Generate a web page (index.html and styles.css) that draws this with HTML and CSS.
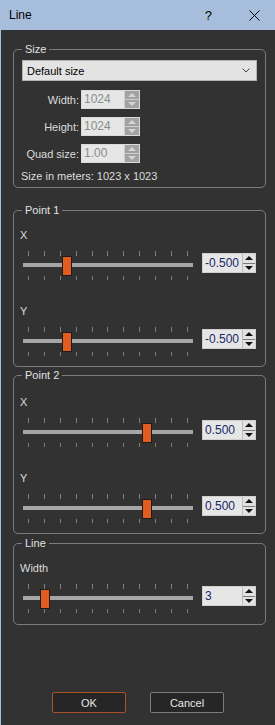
FILE: index.html
```html
<!DOCTYPE html>
<html lang="en">
<head>
    <meta charset="UTF-8">
    <meta name="viewport" content="width=device-width, initial-scale=1.0">
    <title>Line</title>
    <link rel="stylesheet" href="styles.css">
</head>
<body>
    <div class="window">
        <div class="titlebar">
            <span class="title">Line</span>
            <span class="help">?</span>
            <svg class="close" width="11" height="11" viewBox="0 0 11 11">
                <path d="M0.5 0.5 L10.5 10.5 M10.5 0.5 L0.5 10.5" stroke="#000" stroke-width="1" fill="none"/>
            </svg>
        </div>

        <div class="content">
            <fieldset class="group group-size">
                <legend>Size</legend>
                <div class="select">
                    <span>Default size</span>
                    <svg class="chevron" width="8" height="5" viewBox="0 0 8 5">
                        <path d="M0.5 0.5 L4 4 L7.5 0.5" stroke="#444" fill="none"/>
                    </svg>
                </div>
                <div class="field first">
                    <label>Width:</label>
                    <div class="spin disabled">
                        <span class="spin-text">1024</span>
                        <span class="spin-btns"><i class="up"></i><i class="down"></i></span>
                    </div>
                </div>
                <div class="field">
                    <label>Height:</label>
                    <div class="spin disabled">
                        <span class="spin-text">1024</span>
                        <span class="spin-btns"><i class="up"></i><i class="down"></i></span>
                    </div>
                </div>
                <div class="field">
                    <label>Quad size:</label>
                    <div class="spin disabled">
                        <span class="spin-text">1.00</span>
                        <span class="spin-btns"><i class="up"></i><i class="down"></i></span>
                    </div>
                </div>
                <p class="meters">Size in meters: 1023 x 1023</p>
            </fieldset>

            <fieldset class="group group-p1">
                <legend>Point 1</legend>
                <div class="axis">X</div>
                <div class="slider-row">
                    <div class="slider">
                        <div class="ticks top"><i></i><i></i><i></i><i></i><i></i><i></i><i></i><i></i><i></i><i></i><i></i></div>
                        <div class="groove"></div>
                        <div class="ticks bottom"><i></i><i></i><i></i><i></i><i></i><i></i><i></i><i></i><i></i><i></i><i></i></div>
                        <div class="handle" style="left: 40px"></div>
                    </div>
                    <div class="spin">
                        <span class="spin-text">-0.500</span>
                        <span class="spin-btns"><i class="up"></i><i class="down"></i></span>
                    </div>
                </div>
                <div class="axis next">Y</div>
                <div class="slider-row">
                    <div class="slider">
                        <div class="ticks top"><i></i><i></i><i></i><i></i><i></i><i></i><i></i><i></i><i></i><i></i><i></i></div>
                        <div class="groove"></div>
                        <div class="ticks bottom"><i></i><i></i><i></i><i></i><i></i><i></i><i></i><i></i><i></i><i></i><i></i></div>
                        <div class="handle" style="left: 40px"></div>
                    </div>
                    <div class="spin">
                        <span class="spin-text">-0.500</span>
                        <span class="spin-btns"><i class="up"></i><i class="down"></i></span>
                    </div>
                </div>
            </fieldset>

            <fieldset class="group group-p2">
                <legend>Point 2</legend>
                <div class="axis">X</div>
                <div class="slider-row">
                    <div class="slider">
                        <div class="ticks top"><i></i><i></i><i></i><i></i><i></i><i></i><i></i><i></i><i></i><i></i><i></i></div>
                        <div class="groove"></div>
                        <div class="ticks bottom"><i></i><i></i><i></i><i></i><i></i><i></i><i></i><i></i><i></i><i></i><i></i></div>
                        <div class="handle" style="left: 120px"></div>
                    </div>
                    <div class="spin">
                        <span class="spin-text">0.500</span>
                        <span class="spin-btns"><i class="up"></i><i class="down"></i></span>
                    </div>
                </div>
                <div class="axis next">Y</div>
                <div class="slider-row">
                    <div class="slider">
                        <div class="ticks top"><i></i><i></i><i></i><i></i><i></i><i></i><i></i><i></i><i></i><i></i><i></i></div>
                        <div class="groove"></div>
                        <div class="ticks bottom"><i></i><i></i><i></i><i></i><i></i><i></i><i></i><i></i><i></i><i></i><i></i></div>
                        <div class="handle" style="left: 120px"></div>
                    </div>
                    <div class="spin">
                        <span class="spin-text">0.500</span>
                        <span class="spin-btns"><i class="up"></i><i class="down"></i></span>
                    </div>
                </div>
            </fieldset>

            <fieldset class="group group-line">
                <legend>Line</legend>
                <div class="axis">Width</div>
                <div class="slider-row">
                    <div class="slider">
                        <div class="ticks top"><i></i><i></i><i></i><i></i><i></i><i></i><i></i><i></i><i></i><i></i><i></i></div>
                        <div class="groove"></div>
                        <div class="ticks bottom"><i></i><i></i><i></i><i></i><i></i><i></i><i></i><i></i><i></i><i></i><i></i></div>
                        <div class="handle" style="left: 18px"></div>
                    </div>
                    <div class="spin">
                        <span class="spin-text">3</span>
                        <span class="spin-btns"><i class="up"></i><i class="down"></i></span>
                    </div>
                </div>
            </fieldset>
        </div>

        <div class="buttons">
            <button class="btn btn-ok">OK</button>
            <button class="btn">Cancel</button>
        </div>
    </div>
</body>
</html>
```

FILE: styles.css
```css
body{
    margin: 0;
    padding: 0;
    background-color: #323232;
    font-family: "Liberation Sans", Arial, sans-serif;
    font-size: 11px;
    color: #dcdcdc;
}

.window{
    width: 275px;
    height: 725px;
    box-sizing: border-box;
    border-left: 1px solid #a6bddb;
    display: flex;
    flex-direction: column;
}

.titlebar{
    height: 30px;
    flex: none;
    background-color: #a6bddb;
    color: #000;
    font-size: 12px;
    display: flex;
    align-items: center;
    padding-left: 8px;
}
.titlebar .title{
    flex: 1;
}
.titlebar .help{
    font-size: 13px;
    margin-right: 37px;
}
.titlebar .close{
    margin-right: 15px;
}

.content{
    padding: 12px 9px 0 12px;
}

.group{
    margin: 0;
    border: 1px solid #7b7b7b;
    border-radius: 5px;
    padding: 4px 8px 4px 8px;
    min-width: 0;
}
.group legend{
    padding: 0 3px;
    line-height: 14px;
    color: #e2e2e2;
}
.group-p1{
    margin-top: 15px;
    padding-top: 11px;
    padding-bottom: 10px;
}
.group-p2{
    margin-top: 1px;
    padding-top: 13px;
    padding-bottom: 10px;
}
.group-line{
    margin-top: 2px;
    padding-top: 11px;
    padding-bottom: 11px;
}

/* size group */
.select{
    height: 21px;
    box-sizing: border-box;
    background-color: #e3e3e3;
    border: 1px solid #b4b4b4;
    color: #000;
    display: flex;
    align-items: center;
    justify-content: space-between;
    padding: 0 6px 0 4px;
}
.field{
    display: flex;
    align-items: center;
    margin-top: 8px;
}
.field.first{
    margin-top: 9px;
}
.field label{
    width: 57px;
    margin-right: 2px;
    text-align: right;
    line-height: 14px;
}
.meters{
    margin: 6px 0 0 -1px;
    line-height: 14px;
}

/* spin box */
.spin{
    display: flex;
    height: 20px;
    box-sizing: border-box;
    width: 54px;
    background-color: #e6e6e6;
    border: 1px solid #d0d0d0;
}
.spin-text{
    flex: 1;
    color: #16286a;
    font-size: 12px;
    line-height: 18px;
    padding-left: 2px;
}
.spin-btns{
    width: 12px;
    display: flex;
    flex-direction: column;
    border-left: 1px solid #bcbcbc;
    background-color: #e2e2e2;
}
.spin-btns i{
    flex: 1;
    display: flex;
    align-items: center;
    justify-content: center;
}
.spin-btns i.up{
    border-bottom: 1px solid #7a7a7a;
}
.spin-btns i::after{
    content: "";
    width: 0;
    height: 0;
    border-left: 4px solid transparent;
    border-right: 4px solid transparent;
}
.spin-btns i.up::after{
    border-bottom: 4px solid #111;
}
.spin-btns i.down::after{
    border-top: 4px solid #111;
}
.spin.disabled{
    width: 59px;
    height: 19px;
    border-color: #dadada;
}
.spin.disabled .spin-text{
    color: #8c8c8c;
    line-height: 17px;
}
.spin.disabled .spin-btns{
    width: 14px;
    background-color: #a2a2a2;
    border-left: 1px solid #cfcfcf;
}
.spin.disabled .spin-btns i.up{
    border-bottom-color: #cfcfcf;
}
.spin.disabled .spin-btns i.up::after{
    border-bottom-color: #d4d4d4;
}
.spin.disabled .spin-btns i.down::after{
    border-top-color: #d4d4d4;
}

/* sliders */
.axis{
    line-height: 14px;
    margin-left: -2px;
}
.axis.next{
    margin-top: 24px;
}
.slider-row{
    display: flex;
    align-items: flex-start;
    margin-top: 9px;
}
.slider{
    position: relative;
    width: 172px;
    height: 29px;
    margin-right: 8px;
}
.slider .spin{
    margin-top: 2px;
}
.slider-row .spin{
    margin-top: 2px;
}
.groove{
    position: absolute;
    left: 1px;
    top: 12px;
    width: 170px;
    height: 4px;
    background-color: #a6a6a6;
}
.ticks{
    position: absolute;
    left: 6px;
    width: 160px;
    height: 5px;
    display: flex;
    justify-content: space-between;
}
.ticks.top{
    top: 0;
}
.ticks.bottom{
    top: 25px;
    height: 4px;
}
.ticks i{
    width: 1px;
    background-color: #7e7e7e;
}
.handle{
    position: absolute;
    top: 5px;
    width: 10px;
    height: 20px;
    box-sizing: border-box;
    background-color: #e35c1f;
    border: 1px solid #1c1c1c;
}

/* bottom buttons */
.buttons{
    margin-top: auto;
    display: flex;
    justify-content: center;
    gap: 24px;
    padding-bottom: 12px;
}
.btn{
    width: 74px;
    height: 21px;
    background-color: #262626;
    border: 1px solid #7c7c7c;
    border-radius: 2px;
    color: #e6e6e6;
    font-family: "Liberation Sans", Arial, sans-serif;
    font-size: 11px;
    padding: 0;
}
.btn-ok{
    border-color: #a9522a;
}
```
